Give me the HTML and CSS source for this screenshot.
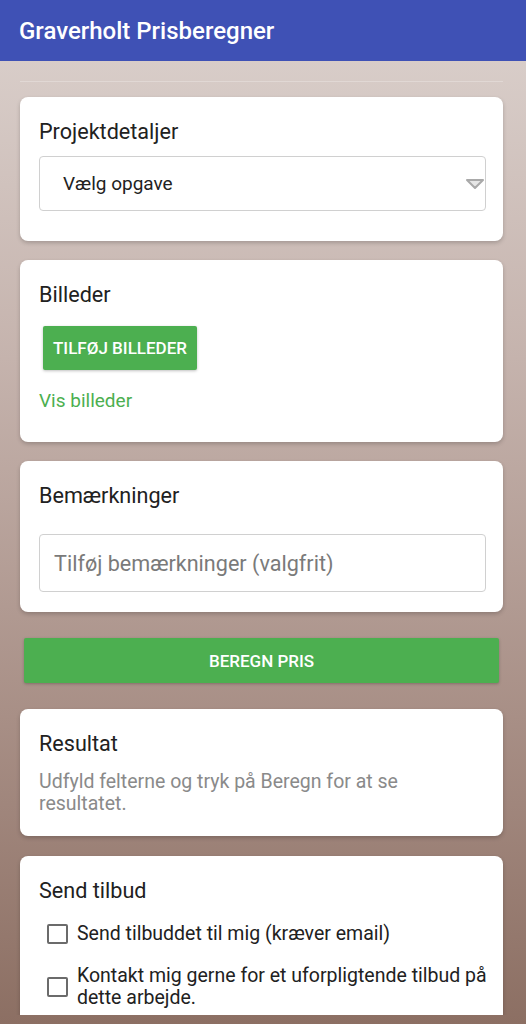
FILE: index.html
```html
<!DOCTYPE html>
<html lang="da">
<head>
    <meta charset="UTF-8">
    <meta name="viewport" content="width=device-width, initial-scale=1.0">
    <title>Graverholt Prisberegner</title>
    <link rel="stylesheet" href="styles.css">
</head>
<body>

<header class="app-bar">
    <h1>Graverholt Prisberegner</h1>
</header>

<main class="screen">
    <div class="top-line"></div>

    <section class="card">
        <h2>Projektdetaljer</h2>
        <div class="select">
            <span>Vælg opgave</span>
            <svg class="select-arrow" width="20" height="12" viewBox="0 0 20 12">
                <path d="M2 2 H18 L10 10 Z" fill="#e6e6e6" stroke="#a9a9a9" stroke-width="2" stroke-linejoin="round"/>
            </svg>
        </div>
    </section>

    <section class="card">
        <h2>Billeder</h2>
        <button class="btn btn-small">TILFØJ BILLEDER</button>
        <a class="link" href="#">Vis billeder</a>
    </section>

    <section class="card card-notes">
        <h2>Bemærkninger</h2>
        <input class="text-input" type="text" placeholder="Tilføj bemærkninger (valgfrit)">
    </section>

    <button class="btn btn-wide">BEREGN PRIS</button>

    <section class="card card-result">
        <h2>Resultat</h2>
        <p class="muted">Udfyld felterne og tryk på Beregn for at se resultatet.</p>
    </section>

    <section class="card card-offer">
        <h2>Send tilbud</h2>
        <label class="check">
            <span class="box"></span>
            <span>Send tilbuddet til mig (kræver email)</span>
        </label>
        <label class="check">
            <span class="box"></span>
            <span>Kontakt mig gerne for et uforpligtende tilbud på dette arbejde.</span>
        </label>
    </section>
</main>

</body>
</html>
```

FILE: styles.css
```css
body {
    font-family: Roboto, 'Noto Sans', sans-serif;
    margin: 0;
    padding: 0;
    height: 1024px;
    overflow: hidden;
    background: linear-gradient(to bottom, #dcd2ce 0%, #c5b3ad 35%, #a88f86 70%, #8c6f63 100%);
    color: #212121;
}

.app-bar {
    background-color: #3f51b5;
    height: 61px;
    display: flex;
    align-items: center;
    padding-left: 19px;
}

.app-bar h1 {
    margin: 0;
    font-size: 24px;
    font-weight: 500;
    color: white;
}

.screen {
    height: 954px;
    overflow: hidden;
    padding: 0 23px 0 20px;
}

.top-line {
    height: 1px;
    background-color: rgba(255, 255, 255, 0.25);
    margin: 20px 0 15px;
}

.card {
    background-color: white;
    border-radius: 8px;
    padding: 22px 17px 30px 19px;
    margin-bottom: 19px;
    box-shadow: 0 2px 4px rgba(0, 0, 0, 0.2);
}

.card h2 {
    margin: 0 0 11px;
    font-size: 21.6px;
    font-weight: 400;
    line-height: 26px;
    color: #212121;
}

.select {
    box-sizing: border-box;
    height: 55px;
    border: 1px solid #d0d0d0;
    border-radius: 4px;
    display: flex;
    align-items: center;
    justify-content: space-between;
    padding-left: 23px;
    font-size: 19px;
    color: #222;
}

.btn {
    display: block;
    border: none;
    background-color: #4caf50;
    color: white;
    font-family: Roboto, sans-serif;
    font-weight: 500;
    font-size: 17px;
    border-radius: 2px;
    box-shadow: 0 1px 3px rgba(0, 0, 0, 0.25);
    cursor: pointer;
}

.btn-small {
    height: 44px;
    width: 154px;
    margin: 18px 0 19px 4px;
}

.link {
    display: block;
    color: #4caf50;
    font-size: 19px;
    line-height: 23px;
    text-decoration: none;
}

.card-notes {
    padding-bottom: 20px;
}

.card-notes h2 {
    margin-bottom: 25px;
}

.text-input {
    display: block;
    box-sizing: border-box;
    width: 100%;
    height: 58px;
    border: 1px solid #d0d0d0;
    border-radius: 4px;
    padding: 0 14px;
    font-family: Roboto, sans-serif;
    font-size: 21.6px;
    color: #222;
}

.text-input::placeholder {
    color: #7a7a7a;
}

.btn-wide {
    width: calc(100% - 8px);
    height: 45px;
    margin: 26px 4px 26px;
}

.card-result {
    padding-bottom: 21px;
    margin-bottom: 20px;
}

.card-result h2 {
    margin-bottom: 14px;
}

.muted {
    margin: 0;
    padding-right: 6px;
    font-size: 19.5px;
    line-height: 22px;
    color: #8a8a8a;
}

.card-offer {
    padding: 22px 6px 40px 19px;
}

.card-offer h2 {
    margin-bottom: 19px;
}

.check {
    display: flex;
    align-items: center;
    gap: 9px;
    margin: 0 0 20px 8px;
    font-size: 19.5px;
    line-height: 22px;
    color: #212121;
}

.box {
    flex: none;
    box-sizing: border-box;
    width: 21px;
    height: 20px;
    border: 2px solid #6b6b6b;
    border-radius: 2px;
}
```
